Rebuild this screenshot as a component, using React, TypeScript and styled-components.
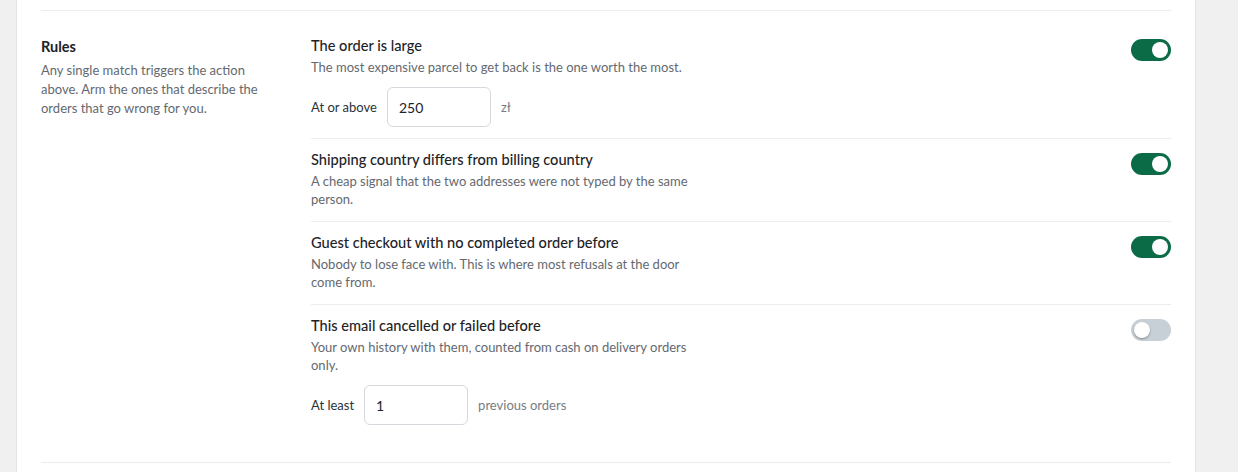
import React, { useState } from 'react';
import styled, { createGlobalStyle } from 'styled-components';

const GlobalStyle = createGlobalStyle`
	html, body {
		margin: 0;
		padding: 0;
		background: #f0f0f1;
		font-family: 'Lato', 'Noto Sans', sans-serif;
		-webkit-font-smoothing: antialiased;
	}
`;

type Rule = {
	id: string;
	title: string;
	description: string;
	on: boolean;
	control?: { label: string; value: string; unit: string };
};

const rules: Rule[] = [
	{
		id: 'large',
		title: 'The order is large',
		description: 'The most expensive parcel to get back is the one worth the most.',
		on: true,
		control: { label: 'At or above', value: '250', unit: 'zł' }
	},
	{
		id: 'country',
		title: 'Shipping country differs from billing country',
		description: 'A cheap signal that the two addresses were not typed by the same person.',
		on: true
	},
	{
		id: 'guest',
		title: 'Guest checkout with no completed order before',
		description: 'Nobody to lose face with. This is where most refusals at the door come from.',
		on: true
	},
	{
		id: 'history',
		title: 'This email cancelled or failed before',
		description: 'Your own history with them, counted from cash on delivery orders only.',
		on: false,
		control: { label: 'At least', value: '1', unit: 'previous orders' }
	}
];

export default function App() {
	const [state, setState] = useState<Record<string, boolean>>(
		Object.fromEntries(rules.map((r) => [r.id, r.on]))
	);

	return (
		<>
			<GlobalStyle />
			<Page>
				<Card>
					<Section>
						<Intro>
							<IntroTitle>Rules</IntroTitle>
							<IntroText>
								Any single match triggers the action above. Arm the ones that describe the
								orders that go wrong for you.
							</IntroText>
						</Intro>
						<RuleList>
							{rules.map((rule) => (
								<RuleRow key={rule.id}>
									<RuleBody>
										<RuleTitle>{rule.title}</RuleTitle>
										<RuleText>{rule.description}</RuleText>
										{rule.control && (
											<Control>
												<ControlLabel>{rule.control.label}</ControlLabel>
												<NumberInput defaultValue={rule.control.value} />
												<Unit>{rule.control.unit}</Unit>
											</Control>
										)}
									</RuleBody>
									<Toggle
										type="button"
										$on={state[rule.id]}
										aria-pressed={state[rule.id]}
										onClick={() => setState((s) => ({ ...s, [rule.id]: !s[rule.id] }))}
									>
										<Knob $on={state[rule.id]} />
									</Toggle>
								</RuleRow>
							))}
						</RuleList>
					</Section>
				</Card>
			</Page>
		</>
	);
}

const Page = styled.div`
	padding: 0 42px 0 16px;
	min-height: 472px;
	box-sizing: border-box;
`;

const Card = styled.div`
	background: #fff;
	border-left: 1px solid #e2e4e7;
	border-right: 1px solid #e2e4e7;
	padding: 10px 24px 0;
	min-height: 472px;
	box-sizing: border-box;
`;

const Section = styled.div`
	display: grid;
	grid-template-columns: 270px 1fr;
	border-top: 1px solid #ececee;
	border-bottom: 1px solid #ececee;
	padding: 14px 0 26px;
`;

const Intro = styled.div`
	padding-top: 12px;
`;

const IntroTitle = styled.div`
	font-size: 14.5px;
	line-height: 20px;
	font-weight: 700;
	color: #1d2327;
`;

const IntroText = styled.p`
	margin: 4px 0 0;
	max-width: 232px;
	font-size: 13px;
	line-height: 19px;
	color: #646970;
`;

const RuleList = styled.div`
	display: flex;
	flex-direction: column;
`;

const RuleRow = styled.div`
	display: flex;
	justify-content: space-between;
	align-items: flex-start;
	padding: 11px 0;
	border-bottom: 1px solid #ececee;

	&:last-child {
		border-bottom: none;
	}
`;

const RuleBody = styled.div`
	display: flex;
	flex-direction: column;
`;

const RuleTitle = styled.div`
	font-size: 14.6px;
	line-height: 20px;
	font-weight: 500;
	color: #1d2327;
`;

const RuleText = styled.p`
	margin: 2px 0;
	max-width: 388px;
	font-size: 13px;
	line-height: 18px;
	color: #646970;
`;

const Control = styled.div`
	display: flex;
	align-items: center;
	gap: 10px;
	margin-top: 9px;
`;

const ControlLabel = styled.span`
	font-size: 13px;
	color: #2c3338;
`;

const NumberInput = styled.input`
	width: 104px;
	height: 40px;
	box-sizing: border-box;
	border: 1px solid #d5d8dc;
	border-radius: 6px;
	padding: 0 11px;
	font-family: inherit;
	font-size: 14px;
	color: #1d2327;
	background: #fff;
	outline: none;
`;

const Unit = styled.span`
	font-size: 13px;
	color: #787c82;
`;

const Toggle = styled.button<{ $on: boolean }>`
	position: relative;
	flex: none;
	width: 40px;
	height: 22px;
	margin-top: 3px;
	padding: 0;
	border: none;
	border-radius: 11px;
	background: ${(p) => (p.$on ? '#0b6b46' : '#c7d0d7')};
	cursor: pointer;
`;

const Knob = styled.span<{ $on: boolean }>`
	position: absolute;
	top: 3px;
	left: ${(p) => (p.$on ? '21px' : '3px')};
	width: 16px;
	height: 16px;
	border-radius: 50%;
	background: #fff;
	box-shadow: ${(p) => (p.$on ? 'none' : '0 1px 2px rgba(0, 0, 0, 0.35)')};
`;
